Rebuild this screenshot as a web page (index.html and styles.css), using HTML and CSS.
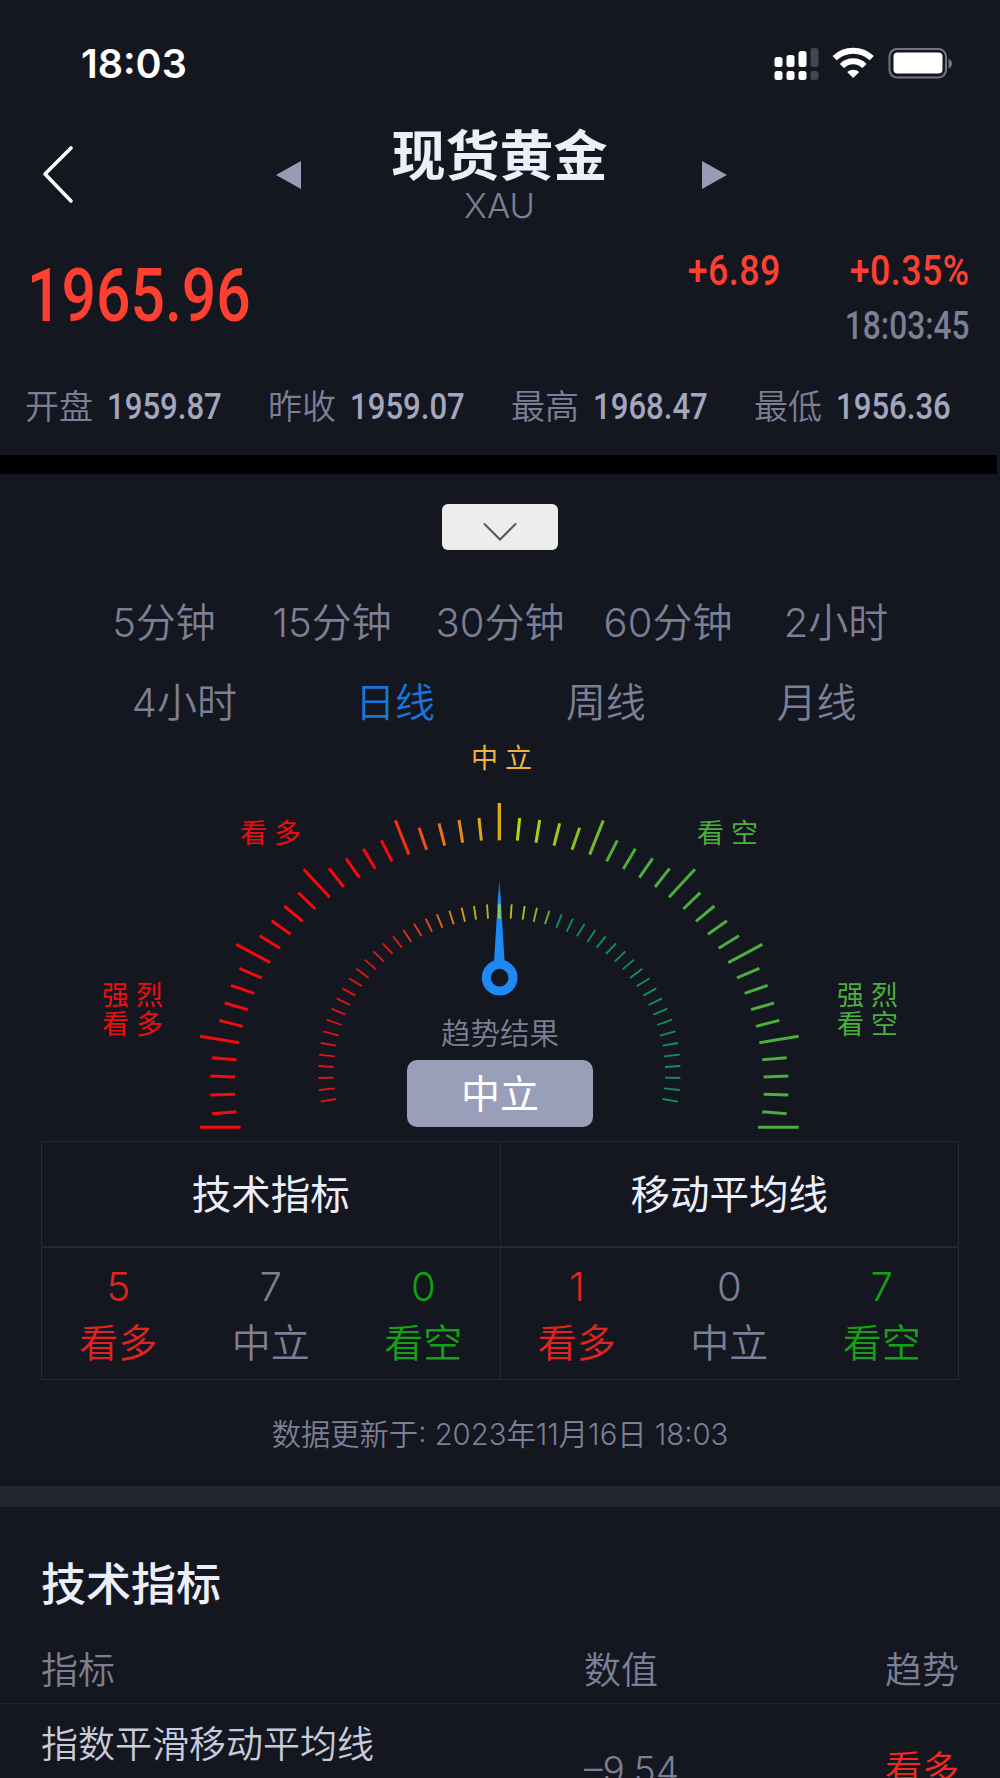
FILE: index.html
```html
<!doctype html>
<html lang="zh-CN">
<head>
<meta charset="UTF-8">
<title>现货黄金</title>
<link rel="stylesheet" href="styles.css">
</head>
<body>
	<div class="status">
		<span class="clock">18:03</span>
		<svg class="icons" width="180" height="36" viewBox="0 0 180 36">
			<g fill="#fff">
				<rect x="0.5" y="11" width="8" height="10" rx="2.5"/>
				<rect x="12.5" y="9" width="8" height="12" rx="2.5"/>
				<rect x="24.5" y="5" width="8" height="16" rx="2.5"/>
				<rect x="0.5" y="25" width="8" height="9" rx="2.5"/>
				<rect x="12.5" y="25" width="8" height="9" rx="2.5"/>
				<rect x="24.5" y="25" width="8" height="9" rx="2.5"/>
			</g>
			<g fill="#44464f">
				<rect x="36.5" y="2" width="8" height="19" rx="2.5"/>
				<rect x="36.5" y="25" width="8" height="9" rx="2.5"/>
			</g>
			<g fill="none" stroke="#fff" stroke-width="6">
				<path d="M60.6 12.2A27 27 0 0 1 97.8 12.2"/>
				<path d="M67.9 20A16 16 0 0 1 90.5 20"/>
			</g>
			<path d="M79.2 32L73.2 26A9 9 0 0 1 85.2 26Z" fill="#fff"/>
			<rect x="115.5" y="3" width="56.5" height="28.5" rx="7.5" fill="none" stroke="#74767c" stroke-width="2"/>
			<rect x="119.5" y="6.5" width="49" height="21" rx="4" fill="#fff"/>
			<path d="M174.5 12.5Q178 14 178 17.5Q178 21 174.5 22.5Z" fill="#74767c"/>
		</svg>
	</div>
	<div class="nav">
		<svg class="back" width="34" height="60" viewBox="0 0 34 60"><path d="M30 3L4 29L30 56" fill="none" stroke="#fff" stroke-width="3.6" stroke-linecap="round" stroke-linejoin="round"/></svg>
		<i class="prev"></i>
		<div class="name">
			<h1>现货黄金</h1>
			<p>XAU</p>
		</div>
		<i class="next"></i>
	</div>
	<div class="quote">
		<strong class="price">1965.96</strong>
		<div class="change">
			<p><b>+6.89</b><b>+0.35%</b></p>
			<time>18:03:45</time>
		</div>
	</div>
	<ul class="stats">
		<li>开盘<b>1959.87</b></li>
		<li>昨收<b>1959.07</b></li>
		<li>最高<b>1968.47</b></li>
		<li>最低<b>1956.36</b></li>
	</ul>
	<div class="line"></div>
	<div class="fold"><svg width="36" height="20" viewBox="0 0 36 20"><path d="M2 1.5L18 17.5L34 1.5" fill="none" stroke="#555" stroke-width="2"/></svg></div>
	<ul class="period">
		<li>5分钟</li>
		<li>15分钟</li>
		<li>30分钟</li>
		<li>60分钟</li>
		<li>2小时</li>
	</ul>
	<ul class="period day">
		<li>4小时</li>
		<li class="on">日线</li>
		<li>周线</li>
		<li>月线</li>
	</ul>
	<div class="gauge">
		<svg width="1000" height="405" viewBox="0 0 1000 405">
			<defs>
				<linearGradient id="needle" x1="0" y1="303" x2="0" y2="350" gradientUnits="userSpaceOnUse">
					<stop offset="0" stop-color="#1e88f5" stop-opacity=".4"/>
					<stop offset="1" stop-color="#1e88f5"/>
				</linearGradient>
			</defs>
			<g transform="translate(180 45) scale(.33333)">
				<path d="M957 303L942 548H974L959 303Z" fill="url(#needle)"/>
				<circle cx="959" cy="593" r="40" fill="none" stroke="#1e88f5" stroke-width="27"/>
				<g id="ticks"></g>
			</g>
			<g class="tips">
				<text x="471" y="33" fill="#f0b43c">中立</text>
				<text x="240" y="108" fill="#f00d0d">看多</text>
				<text x="697" y="108" fill="#4cae3c">看空</text>
				<text x="102" y="270" fill="#f00d0d">强烈</text>
				<text x="102" y="299" fill="#f00d0d">看多</text>
				<text x="837" y="270" fill="#4cae3c">强烈</text>
				<text x="837" y="299" fill="#4cae3c">看空</text>
			</g>
		</svg>
		<div class="result">
			<p>趋势结果</p>
			<strong>中立</strong>
		</div>
	</div>
	<div class="count">
		<div class="box">
			<h3>技术指标</h3>
			<ul>
				<li class="red">5<span>看多</span></li>
				<li>7<span>中立</span></li>
				<li class="green">0<span>看空</span></li>
			</ul>
		</div>
		<div class="box">
			<h3>移动平均线</h3>
			<ul>
				<li class="red">1<span>看多</span></li>
				<li>0<span>中立</span></li>
				<li class="green">7<span>看空</span></li>
			</ul>
		</div>
	</div>
	<p class="update">数据更新于: 2023年11月16日 18:03</p>
	<div class="detail">
		<h2>技术指标</h2>
		<div class="row head"><span>指标</span><span>数值</span><span>趋势</span></div>
		<div class="row"><span class="title">指数平滑移动平均线</span><span class="val">–9.54</span><span class="val red">看多</span></div>
	</div>
	<script type="text/javascript">
	//左半边刻度 x1,y1,x2,y2，右半边按中轴镜像
	var axis = 958;
	var outer = [
		[60,1042,182,1042],[96,1001,169,995],[91,945,165,943],[91,888,165,891],[96,833,169,839],
		[60,769,178,788],[118,721,188,739],[134,669,203,689],[153,616,222,640],[178,565,245,594],
		[169,493,271,548],[239,467,300,505],[275,422,332,463],[313,378,368,424],[355,338,406,387],
		[371,268,449,352],[447,265,491,321],[498,235,538,293],[550,206,586,267],[604,181,636,244],
		[646,121,687,224],[717,143,740,209],[777,130,794,197],[837,120,848,188],[897,114,904,182]
	];
	var inner = [
		[422,965,468,957],[417,930,464,925],[415,894,461,893],[415,858,461,861],[417,824,464,829],
		[422,789,468,797],[430,754,476,767],[440,719,485,735],[454,686,496,704],[470,655,510,675],
		[487,625,526,647],[507,595,546,619],[529,566,566,594],[554,539,588,568],[580,514,612,545],
		[608,490,638,522],[639,469,666,503],[670,450,694,486],[702,431,725,469],[737,416,756,455],
		[771,403,787,443],[808,392,821,433],[845,383,855,425],[882,378,888,419],[921,373,924,416]
	];
	//靠近中间的刻度颜色，其余用默认色
	var outerLeft = {20:"#f5300f",21:"#f0501a",22:"#ee7414",23:"#e88a14",24:"#dda814"};
	var outerRight = {20:"#74b82c",21:"#86c41e",22:"#9ccc14",23:"#a8d40c",24:"#b4d808"};
	var innerLeft = {17:"#e03418",18:"#e03c18",19:"#e05018",20:"#e06c18",21:"#dc8418",22:"#d2a014",23:"#c4ac18",24:"#b8b424"};
	var innerRight = {21:"#6cb030",22:"#8cbc20",23:"#a8c418",24:"#c0bc18"};
	var html = "";
	function line(x1, y1, x2, y2, color, w){
		html += '<line x1="' + x1 + '" y1="' + y1 + '" x2="' + x2 + '" y2="' + y2 + '" stroke="' + color + '" stroke-width="' + w + '"/>';
	}
	function draw(list, left, right, red, green, w){
		for (var i = 0; i < list.length; i++){
			var t = list[i];
			line(t[0], t[1], t[2], t[3], left[i] || red, w);
			line(axis*2-t[0], t[1], axis*2-t[2], t[3], right[i] || green, w);
		}
	}
	draw(outer, outerLeft, outerRight, "#f40b0b", "#4cae3c", 9);
	draw(inner, innerLeft, innerRight, "#dc1616", "#12905a", 5.5);
	line(axis, 69, axis, 181, "#dcae0c", 10);
	line(axis, 373, axis, 416, "#8ccc50", 8);
	document.getElementById("ticks").innerHTML = html;
	</script>
</body>
</html>
```
FILE: styles.css
```css
*{margin:0;padding:0;box-sizing:border-box;}
body{width:1000px;height:1778px;overflow:hidden;background:#141720;color:#7c7f95;font-family:Inter,"Noto Sans CJK SC",sans-serif;font-weight:350;}
ul,li{list-style:none;}
i{font-style:normal;}
/*status*/
.status{height:110px;padding:46px 46px 0 81px;display:flex;justify-content:space-between;align-items:flex-start;}
.status .clock{color:#fff;font-size:39.5px;line-height:37px;font-weight:600;}
/*nav*/
.nav{height:130px;padding:0 273px 0 41px;display:flex;align-items:flex-start;}
.back{margin:35px 201px 0 0;}
.prev,.next{margin-top:51px;border:14px solid transparent;}
.prev{border-left:0;border-right:25px solid #979bb6;}
.next{border-right:0;border-left:25px solid #979bb6;}
.nav .name{flex:1;text-align:center;padding:11px 4px 0 0;}
.nav h1{font-size:54px;line-height:71px;font-weight:700;color:#eceefb;}
.nav p{font-size:34.5px;line-height:32px;margin-top:-2px;font-weight:300;}
/*quote*/
.quote{height:138px;padding:10px 30px 0 27px;display:flex;justify-content:space-between;color:#ff4030;font-family:Roboto,sans-serif;}
.price{font-size:74px;line-height:92px;font-weight:500;transform:scaleX(.82);transform-origin:left;}
.change{text-align:right;}
.change p{font-size:42.5px;line-height:42px;letter-spacing:.6px;transform:scaleX(.84);transform-origin:right;}
.change b{font-weight:500;margin-left:82px;}
.change time{display:block;font-size:38px;line-height:38px;margin-top:15px;font-weight:500;color:#7c7f95;transform:scaleX(.835);transform-origin:right;}
/*stats*/
.stats{height:77px;padding-left:25px;display:grid;grid-template-columns:repeat(4,243px);}
.stats li{display:flex;font-size:34px;line-height:58px;}
.stats b{font:500 37.5px/57px Roboto,sans-serif;color:#a4a6bf;margin-left:14px;transform:scaleX(.83);transform-origin:left;}
.line{width:997px;height:19px;background:#000003;}
/*period*/
.fold{width:116px;height:46px;margin:30px 0 33px 442px;border-radius:6px;background:#ededed;text-align:center;padding-top:18px;line-height:0;}
.period{display:flex;margin:0 80px;height:80px;}
.period li{flex:1;text-align:center;font-size:40px;line-height:80px;}
.day{margin:0 78px 0 79px;}
.period .on{color:#1976d8;}
/*gauge*/
.gauge{position:relative;height:401px;margin-top:-8px;}
.gauge svg{display:block;}
.tips{font-size:27px;letter-spacing:7px;font-weight:400;}
.result{position:absolute;left:407px;top:278px;width:186px;text-align:center;}
.result p{font-size:29.5px;line-height:40px;}
.result strong{display:block;height:67px;margin-top:7px;border-radius:10px;background:#999eb9;color:#fff;font-size:39px;line-height:68px;font-weight:400;}
/*count*/
.count{margin:5px 41px 0;height:239px;display:flex;border:1px solid #262932;}
.box{flex:1;}
.box+.box{border-left:1px solid #262932;}
.box h3{height:106px;line-height:107px;border-bottom:2px solid #262932;text-align:center;font-size:39.5px;font-weight:400;color:#eceefb;}
.box ul{display:flex;padding-top:11px;}
.box li{flex:1;text-align:center;font-size:40px;line-height:56px;}
.box span{display:block;font-size:39px;}
.box .red{color:#e0241f;}
.box .green{color:#15a015;}
.update{height:106px;line-height:109px;text-align:center;font-size:29.3px;}
/*detail*/
.detail{border-top:21px solid #232631;padding-top:44px;}
.detail h2{margin-left:41px;font-size:45px;line-height:67px;font-weight:500;color:#eceefb;}
.row{height:74px;padding:0 41px;display:grid;grid-template-columns:543px 1fr auto;font-size:37px;line-height:74px;}
.head{margin-top:14px;height:72px;line-height:77px;border-bottom:1px solid #20242d;}
.title{color:#c9cbdc;line-height:82px;}
.val{line-height:131px;}
.row .red{color:#f02a22;}
```
